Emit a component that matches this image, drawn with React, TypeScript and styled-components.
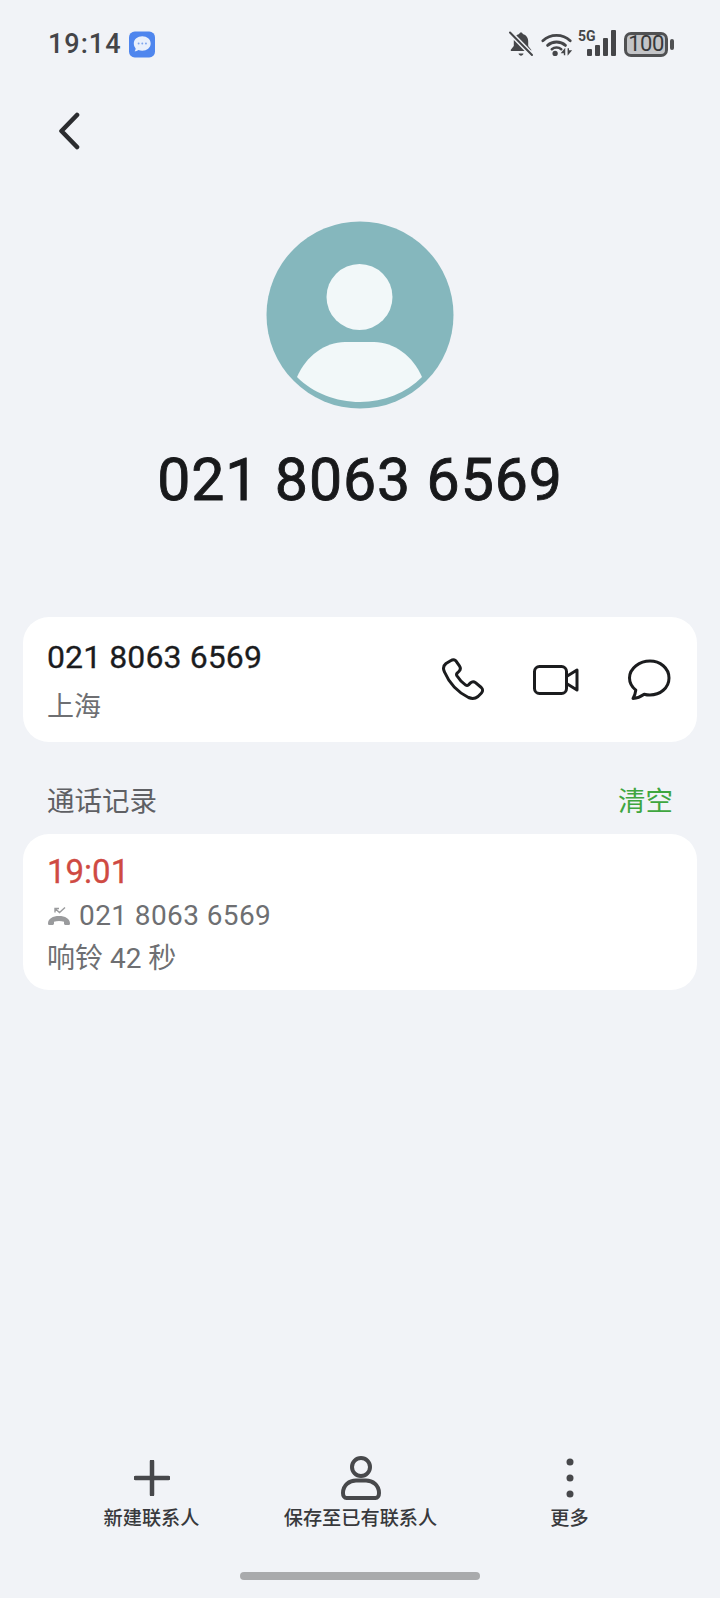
import React from "react";
import styled, { createGlobalStyle } from "styled-components";

const GlobalStyle = createGlobalStyle`
  html, body {
    margin: 0;
    padding: 0;
    background: #f1f3f7;
  }
  * {
    box-sizing: border-box;
  }
`;

const fontStack = `Roboto, "Noto Sans CJK SC", sans-serif`;

const Page = styled.div`
  width: 720px;
  height: 1598px;
  display: flex;
  flex-direction: column;
  background: #f1f3f7;
  font-family: ${fontStack};
  overflow: hidden;
`;

const StatusBar = styled.div`
  height: 88px;
  padding: 0 44px 0 48px;
  display: flex;
  align-items: center;
  justify-content: space-between;
`;

const StatusLeft = styled.div`
  display: flex;
  align-items: center;
  gap: 7px;
`;

const StatusTime = styled.span`
  font-size: 27px;
  font-weight: 500;
  letter-spacing: 1px;
  color: #444548;
`;

const StatusRight = styled.div`
  display: flex;
  align-items: center;
`;

const StatusIcon = styled.span<{ $gap: number; $lift?: number }>`
  display: flex;
  margin-left: ${(p) => p.$gap}px;
  margin-top: ${(p) => -(p.$lift ?? 0)}px;
`;

const BatteryBox = styled.div`
  position: relative;
  width: 44px;
  height: 25px;
  margin-left: 8px;
  margin-right: 8px;
  border: 3px solid #505153;
  border-radius: 7px;
  background: #c3c4c7;
  display: flex;
  align-items: center;
  justify-content: center;
  font-size: 22px;
  letter-spacing: -0.5px;
  line-height: 1;
  color: #37383a;
  &::after {
    content: "";
    position: absolute;
    right: -9px;
    top: 4px;
    width: 4px;
    height: 11px;
    border-radius: 2px;
    background: #505153;
  }
`;

const BackRow = styled.div`
  height: 80px;
  padding: 6px 0 0 58px;
  display: flex;
  align-items: center;
`;

const Hero = styled.div`
  margin-top: 53px;
  display: flex;
  flex-direction: column;
  align-items: center;
`;

const PhoneTitle = styled.h1`
  margin: 36px 0 0;
  font-size: 59px;
  line-height: 70px;
  font-weight: 400;
  letter-spacing: 0.9px;
  -webkit-text-stroke: 0.9px #18191b;
  color: #18191b;
`;

const Card = styled.div<{ $height: number }>`
  margin: 0 23px;
  height: ${(p) => p.$height}px;
  background: #ffffff;
  border-radius: 26px;
`;

const NumberCard = styled(Card)`
  margin-top: 102px;
  padding: 0 25px 0 24px;
  display: flex;
  align-items: center;
  justify-content: space-between;
`;

const NumberInfo = styled.div`
  display: flex;
  flex-direction: column;
  gap: 13px;
  padding-top: 3px;
`;

const NumberText = styled.div`
  font-size: 32px;
  line-height: 38px;
  font-weight: 400;
  letter-spacing: 0.1px;
  -webkit-text-stroke: 0.3px #1b1c1e;
  color: #1b1c1e;
`;

const PlaceText = styled.div`
  font-size: 27px;
  line-height: 36px;
  color: #6e6f72;
`;

const Actions = styled.div`
  display: flex;
  align-items: center;
  gap: 48px;
  margin-right: 1px;
`;

const SectionHeader = styled.div`
  margin-top: 37px;
  height: 40px;
  padding: 0 47px;
  display: flex;
  align-items: center;
  justify-content: space-between;
  font-size: 27.5px;
`;

const SectionTitle = styled.span`
  color: #5f6064;
`;

const ClearLink = styled.span`
  color: #3fa63f;
`;

const RecordCard = styled(Card)`
  margin-top: 15px;
  padding: 17px 24px 0;
`;

const RecordTime = styled.div`
  font-size: 33px;
  line-height: 42px;
  font-weight: 400;
  -webkit-text-stroke: 0.3px #cf4a43;
  color: #cf4a43;
`;

const RecordNumber = styled.div`
  margin-top: 2px;
  display: flex;
  align-items: center;
  gap: 8px;
  font-size: 28px;
  line-height: 42px;
  letter-spacing: 0.4px;
  color: #6e6f72;
`;

const RecordDuration = styled.div`
  margin-top: 2px;
  font-size: 28px;
  line-height: 40px;
  color: #6e6f72;
`;

const BottomBar = styled.div`
  margin-top: auto;
  padding-left: 47px;
  display: grid;
  grid-template-columns: repeat(3, 209px);
`;

const BarItem = styled.div`
  display: flex;
  flex-direction: column;
  align-items: center;
  gap: 5px;
`;

const IconSlot = styled.div`
  height: 45px;
  display: flex;
  align-items: center;
  justify-content: center;
`;

const BarLabel = styled.span`
  font-size: 19.2px;
  line-height: 28px;
  font-weight: 500;
  white-space: nowrap;
  color: #38393c;
`;

const HomeZone = styled.div`
  height: 65px;
  display: flex;
  justify-content: center;
  padding-top: 39px;
`;

const HomePill = styled.div`
  width: 240px;
  height: 8px;
  border-radius: 4px;
  background: #a9aaac;
`;

const BellOff = () => (
  <svg width="26" height="26" viewBox="0 0 26 26">
    <path
      d="M13 1.500c1 0 1.700.7 1.800 1.600 3.400.9 5.400 3.700 5.400 7.400v4.600l3 3.600v1.300H2.800v-1.300l3-3.600v-4.600c0-3.700 2-6.500 5.400-7.400.1-.9.800-1.600 1.800-1.600z"
      fill="#454649"
    />
    <path d="M10.500 22.500h5c-.4 1.400-1.300 2.200-2.500 2.200s-2.100-.8-2.500-2.200z" fill="#454649" />
    <path d="M2 1.500 24 24" stroke="#f1f3f7" strokeWidth="5" />
    <path d="M2 1.500 24 24" stroke="#454649" strokeWidth="2" strokeLinecap="round" />
  </svg>
);

const Wifi = () => (
  <svg width="32" height="26" viewBox="0 0 34 26" fill="none">
    <path d="M2 9.500c8-7.600 21-7.600 29 0" stroke="#454649" strokeWidth="3" strokeLinecap="round" />
    <path d="M7 14.500c5.400-4.800 13.600-4.800 19 0" stroke="#454649" strokeWidth="3" strokeLinecap="round" />
    <path d="M11.500 18.500c2.800-2.300 7.200-2.300 10 0" stroke="#454649" strokeWidth="2.800" strokeLinecap="round" />
    <circle cx="15" cy="23" r="2.800" fill="#454649" />
    <path d="M25 25v-6l-2.500 3h2.500M29 17.500v6l2.500-3H29" stroke="#454649" strokeWidth="1.500" />
  </svg>
);

const Signal = () => (
  <svg width="38" height="30" viewBox="0 -4 38 30">
    <text x="0" y="11" fontFamily="Roboto, sans-serif" fontSize="14" fontWeight="700" fill="#454649">
      5G
    </text>
    <rect x="9" y="19" width="5" height="7" rx="1" fill="#454649" />
    <rect x="17" y="15" width="5" height="11" rx="1" fill="#454649" />
    <rect x="25" y="8" width="5" height="18" rx="1" fill="#454649" />
    <rect x="33" y="0" width="5" height="26" rx="1" fill="#454649" />
  </svg>
);

const MessageBadge = () => (
  <svg width="26" height="27" viewBox="0 0 27 27">
    <rect width="27" height="27" rx="6" fill="#4f86ee" />
    <path
      d="M13.800 5C18.600 5 22.500 8.200 22.500 12.500S18.600 20 13.800 20c-1.500 0-2.800-.3-4-.8-1.100.9-2.600 1.400-4 1.400.7-.9 1.100-2 1.100-3C5.800 16.200 5 14.400 5 12.500 5 8.200 9 5 13.800 5z"
      fill="#e9f0fc"
    />
    <circle cx="10" cy="12.500" r="1" fill="#7ea5ee" />
    <circle cx="13.800" cy="12.500" r="1" fill="#7ea5ee" />
    <circle cx="17.600" cy="12.500" r="1" fill="#7ea5ee" />
  </svg>
);

const BackIcon = () => (
  <svg width="22" height="38" viewBox="0 0 22 38" fill="none">
    <path d="M19 3 3.500 19 19 35" stroke="#2b2c2f" strokeWidth="4.600" strokeLinecap="round" strokeLinejoin="round" />
  </svg>
);

const Avatar = () => (
  <svg width="188" height="188" viewBox="0 0 188 188">
    <circle cx="94" cy="94" r="93.500" fill="#85b7bd" />
    <circle cx="93.500" cy="76" r="33" fill="#f2f8f9" />
    <path
      d="M31 156c9-21 28-35 48-35h29c20 0 39 14 48 35-16 16-38 25-62 25s-47-9-63-25z"
      fill="#f2f8f9"
    />
  </svg>
);

const PhoneIcon = () => (
  <svg width="44" height="44" viewBox="0 0 44 44" fill="none">
    <path
      d="M10 2.500 5 5.500C2.500 7.500 2 11 3.500 14c4.500 10.500 13 20 24 25.500 3.500 1.500 7 1 9.500-1l3.500-3.500c1.500-1.500 1.500-4-.2-5.500l-5.800-4.800c-1.500-1.200-3.600-1.100-5 .2l-2 2c-.8.7-1.900.8-2.800.2-3.500-2.500-6.500-5.700-8.800-9.400-.5-.9-.4-2 .4-2.700l1.800-1.800c1.300-1.300 1.500-3.400.5-5l-3.900-5.600C13.500 1.700 11.500 1.500 10 2.500z"
      stroke="#1b1c1e"
      strokeWidth="3"
      strokeLinejoin="round"
    />
  </svg>
);

const VideoIcon = () => (
  <svg width="46" height="30" viewBox="0 0 46 30" fill="none">
    <rect x="1.500" y="1.500" width="32" height="27" rx="5" stroke="#1b1c1e" strokeWidth="3" />
    <path d="M33.500 11.500 44 5v20l-10.500-6.500" stroke="#1b1c1e" strokeWidth="3" strokeLinejoin="round" />
  </svg>
);

const BubbleIcon = () => (
  <svg width="44" height="42" viewBox="0 0 44 42" fill="none">
    <path
      d="M23 2C33 2 42 9 42 19s-9 17-19 17c-2 0-4-.3-5.800-.8-3.500 2.500-7.500 4-11.200 4.300 1.500-2.600 2.500-5.400 2.800-8.300C5 28 2.500 23.500 2.500 19 2.500 9 13 2 23 2z"
      stroke="#1b1c1e"
      strokeWidth="3"
      strokeLinejoin="round"
    />
  </svg>
);

const MissedCall = () => (
  <svg width="24" height="22" viewBox="0 0 24 22" fill="none">
    <path
      d="M1 18.500c0-5 5-7.500 11-7.500s11 2.500 11 7.500c0 1-.7 1.500-1.500 1.500h-3c-.8 0-1.500-.6-1.500-1.500v-1.800c-3-1-7-1-10 0v1.800c0 .9-.7 1.500-1.500 1.500h-3C1.700 20 1 19.500 1 18.500z"
      fill="#9a9b9d"
    />
    <path d="M18 2.500 12.500 7.500 8 3.500M8 7.500v-4h4" stroke="#9a9b9d" strokeWidth="1.400" />
  </svg>
);

const PlusIcon = () => (
  <svg width="36" height="36" viewBox="0 0 36 36">
    <path d="M18 1.500v33M1.500 18h33" stroke="#47484b" strokeWidth="4.500" strokeLinecap="round" />
  </svg>
);

const PersonIcon = () => (
  <svg width="40" height="44" viewBox="0 0 40 44" fill="none">
    <circle cx="20" cy="11" r="9" stroke="#47484b" strokeWidth="4" />
    <path
      d="M2 37c0-8 6.500-12.500 13-12.500h10C31.500 24.500 38 29 38 37c0 3-1.500 5-3.500 5h-29C3.500 42 2 40 2 37z"
      stroke="#47484b"
      strokeWidth="4"
    />
  </svg>
);

const MoreIcon = () => (
  <svg width="10" height="44" viewBox="0 0 10 44">
    <circle cx="5" cy="6" r="3.500" fill="#47484b" />
    <circle cx="5" cy="22" r="3.500" fill="#47484b" />
    <circle cx="5" cy="38" r="3.500" fill="#47484b" />
  </svg>
);

export default function App() {
  return (
    <Page>
      <GlobalStyle />
      <StatusBar>
        <StatusLeft>
          <StatusTime>19:14</StatusTime>
          <MessageBadge />
        </StatusLeft>
        <StatusRight>
          <BellOff />
          <StatusIcon $gap={7}>
            <Wifi />
          </StatusIcon>
          <StatusIcon $gap={5} $lift={6}>
            <Signal />
          </StatusIcon>
          <BatteryBox>100</BatteryBox>
        </StatusRight>
      </StatusBar>
      <BackRow>
        <BackIcon />
      </BackRow>
      <Hero>
        <Avatar />
        <PhoneTitle>021 8063 6569</PhoneTitle>
      </Hero>
      <NumberCard $height={125}>
        <NumberInfo>
          <NumberText>021 8063 6569</NumberText>
          <PlaceText>上海</PlaceText>
        </NumberInfo>
        <Actions>
          <PhoneIcon />
          <VideoIcon />
          <BubbleIcon />
        </Actions>
      </NumberCard>
      <SectionHeader>
        <SectionTitle>通话记录</SectionTitle>
        <ClearLink>清空</ClearLink>
      </SectionHeader>
      <RecordCard $height={156}>
        <RecordTime>19:01</RecordTime>
        <RecordNumber>
          <MissedCall />
          021 8063 6569
        </RecordNumber>
        <RecordDuration>响铃 42 秒</RecordDuration>
      </RecordCard>
      <BottomBar>
        <BarItem>
          <IconSlot>
            <PlusIcon />
          </IconSlot>
          <BarLabel>新建联系人</BarLabel>
        </BarItem>
        <BarItem>
          <IconSlot>
            <PersonIcon />
          </IconSlot>
          <BarLabel>保存至已有联系人</BarLabel>
        </BarItem>
        <BarItem>
          <IconSlot>
            <MoreIcon />
          </IconSlot>
          <BarLabel>更多</BarLabel>
        </BarItem>
      </BottomBar>
      <HomeZone>
        <HomePill />
      </HomeZone>
    </Page>
  );
}
